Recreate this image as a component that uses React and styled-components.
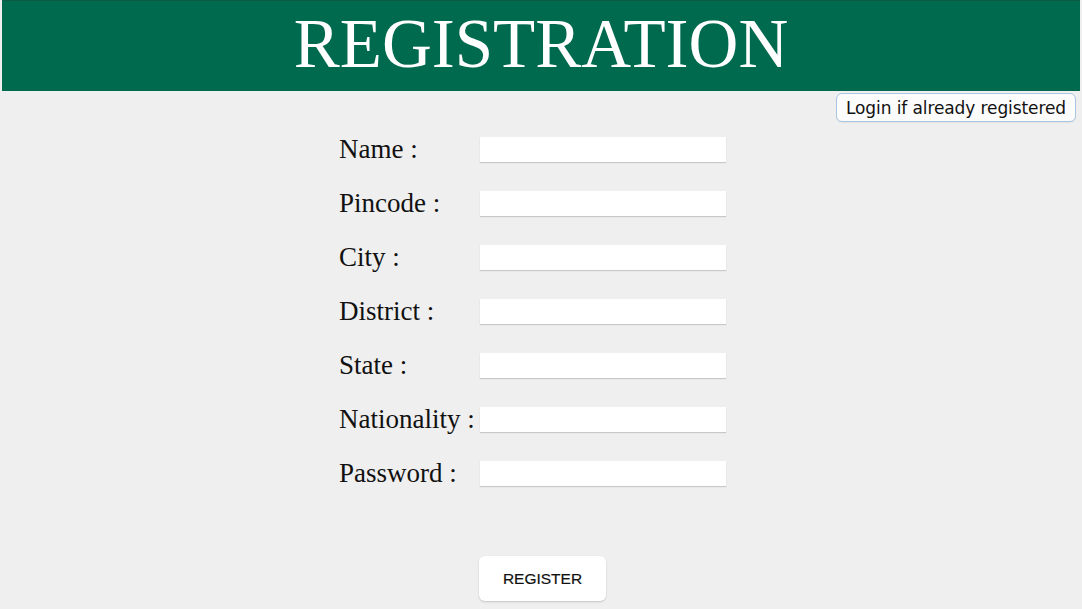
import React from "react";
import styled, { createGlobalStyle } from "styled-components";

const Global = createGlobalStyle`
  html, body { margin: 0; padding: 0; background: #efefef; }
  body { font-family: "Liberation Serif", "Times New Roman", serif; }
`;

const Page = styled.div`
  min-height: 609px;
  background: #efefef;
  display: flex;
  flex-direction: column;
`;

const Header = styled.header`
  height: 91px;
  box-sizing: border-box;
  margin: 0 2px;
  background: #006a4f;
  border-top: 1px solid #0d5a43;
  display: flex;
  justify-content: center;
  padding-top: 5px;
`;

const Title = styled.h1`
  margin: 0;
  font-family: "Liberation Serif", "Times New Roman", serif;
  font-weight: 400;
  font-size: 69px;
  line-height: 76px;
  color: #ffffff;
`;

const TopBar = styled.div`
  height: 31px;
  box-sizing: border-box;
  display: flex;
  justify-content: flex-end;
  padding: 2px 6px 0 0;
`;

const LoginButton = styled.button`
  width: 240px;
  height: 29px;
  box-sizing: border-box;
  border: 1.5px solid #a9c6e3;
  border-radius: 6px;
  background: #fcfcfc;
  font-family: "DejaVu Sans", Verdana, sans-serif;
  font-size: 17px;
  letter-spacing: -0.1px;
  color: #111;
  padding: 0;
  cursor: pointer;
  box-shadow: 0 1px 1px rgba(0, 0, 0, 0.06);
`;

const Form = styled.form`
  display: grid;
  grid-template-columns: 140px 246px;
  grid-auto-rows: 54px;
  align-items: center;
  margin-left: 339px;
`;

const Label = styled.label`
  font-family: "Liberation Serif", "Times New Roman", serif;
  font-size: 27px;
  color: #111;
  white-space: nowrap;
`;

const Input = styled.input`
  width: 246px;
  height: 25px;
  box-sizing: border-box;
  border: none;
  background: #ffffff;
  box-shadow: 0 1px 1px rgba(0, 0, 0, 0.16);
  outline: none;
  margin-left: 1px;
`;

const ButtonCell = styled.div`
  grid-column: 2;
  padding-top: 56px;
  align-self: start;
`;

const RegisterButton = styled.button`
  width: 127px;
  height: 45px;
  border: none;
  border-radius: 6px;
  background: #ffffff;
  box-shadow: 0 1px 2px rgba(0, 0, 0, 0.18);
  font-family: "Liberation Sans", Arial, sans-serif;
  font-size: 15.5px;
  color: #111;
  -webkit-text-stroke: 0.2px #111;
  margin-left: 0;
  cursor: pointer;
`;

const fields = [
  "Name :",
  "Pincode :",
  "City :",
  "District :",
  "State :",
  "Nationality :",
  "Password :",
];

export default function App() {
  return (
    <Page>
      <Global />
      <Header>
        <Title>REGISTRATION</Title>
      </Header>
      <TopBar>
        <LoginButton type="button">Login if already registered</LoginButton>
      </TopBar>
      <Form onSubmit={(e) => e.preventDefault()}>
        {fields.map((f) => (
          <React.Fragment key={f}>
            <Label>{f}</Label>
            <Input type={f.startsWith("Password") ? "password" : "text"} />
          </React.Fragment>
        ))}
        <ButtonCell>
          <RegisterButton type="submit">REGISTER</RegisterButton>
        </ButtonCell>
      </Form>
    </Page>
  );
}
